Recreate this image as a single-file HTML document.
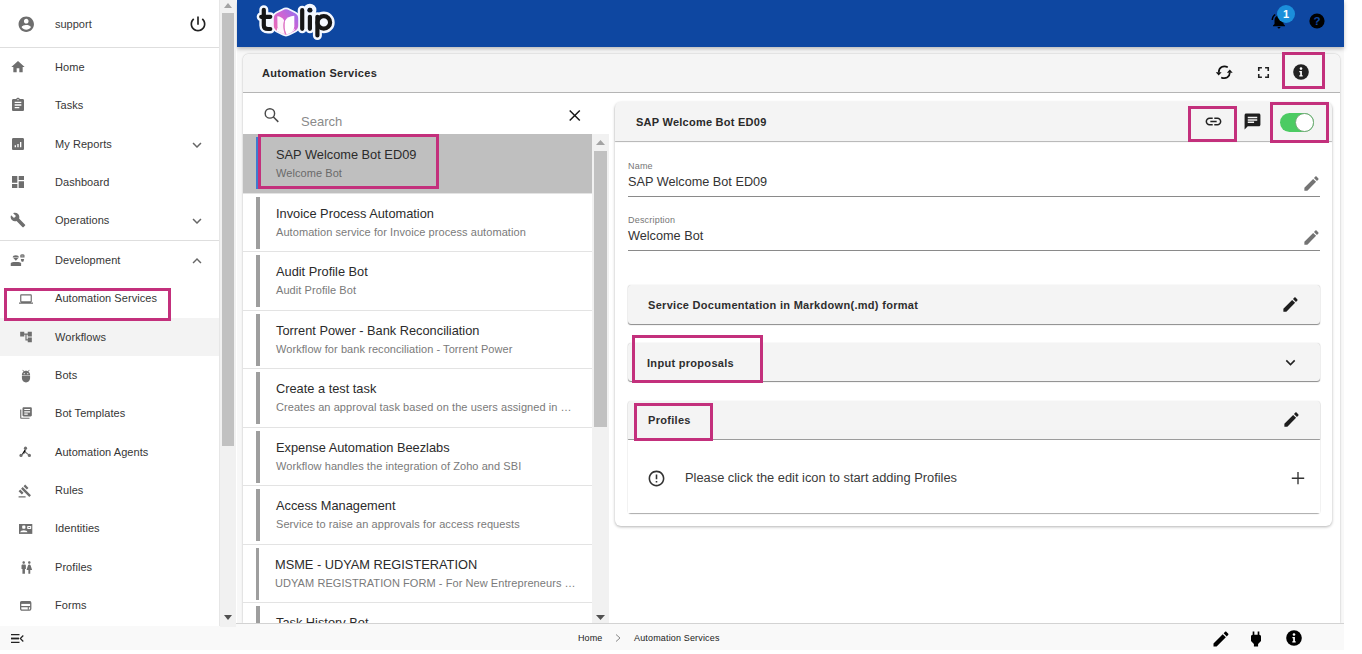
<!DOCTYPE html>
<html><head><meta charset="utf-8">
<style>
*{box-sizing:border-box;margin:0;padding:0}
html,body{width:1362px;height:654px;overflow:hidden;background:#fff;font-family:"Liberation Sans",sans-serif;color:#333}
.abs{position:absolute}
svg{display:block}
.hl{position:absolute;border:3px solid #c3307c}
/* sidebar */
#side{z-index:6;position:absolute;left:0;top:0;width:220px;height:626px;background:#fff;border-right:1px solid #e6e6e6}
.si{position:absolute;left:0;width:219px;height:38px}
.si .ic{position:absolute;left:10px;top:11px;width:16px;height:16px;fill:#6e6e6e}
.si .tx{position:absolute;left:55px;top:13px;font-size:11px;color:#363636;white-space:nowrap;letter-spacing:.06px}
.si .ch{position:absolute;left:188px;top:10.5px;width:18px;height:18px;fill:#666}
#sscroll{z-index:6;position:absolute;left:220px;top:0;width:16px;height:627px;background:#f1f1f1}
/* topbar */
#top{z-index:5;position:absolute;left:237px;top:0;width:1107px;height:47px;background:#0e47a1;box-shadow:0 2px 4px rgba(0,0,0,.25)}
/* bottom bar */
#bot{z-index:5;position:absolute;left:0;top:623px;width:1344px;height:27px;background:#f9f9f9;border-top:1px solid #d3d3d3}
/* list */
.li{position:absolute;left:243px;width:349px;height:58.5px;border-bottom:1px solid #e3e3e3;background:#fff}
.li .bar{position:absolute;left:13px;top:3px;width:4px;height:52px;background:#9e9e9e}
.li .t1{position:absolute;left:33px;top:12px;font-size:12.8px;color:#2b2b2b;white-space:nowrap}
.li .t2{position:absolute;left:33px;top:32px;font-size:11px;color:#7a7a7a;white-space:nowrap;letter-spacing:.07px}
.ph{position:absolute;background:#f4f4f4;box-shadow:0 1px 1px rgba(0,0,0,.45),0 0 1px rgba(0,0,0,.25);border-radius:3px}
.ph .t{position:absolute;left:20px;top:14px;font-size:11px;font-weight:bold;color:#2e2e2e;letter-spacing:.3px;white-space:nowrap}
</style></head><body>

<!-- sidebar -->
<div id="side">
  <div class="abs" style="left:0;top:0;width:219px;height:48px;border-bottom:1px solid #dedede"></div>
  <svg class="abs" style="left:16.5px;top:15.2px;fill:#6e6e6e" width="18.5" height="18.5" viewBox="0 0 24 24"><path d="M12 2C6.48 2 2 6.48 2 12s4.480 10 10 10 10-4.48 10-10S17.52 2 12 2zm0 3c1.66 0 3 1.34 3 3s-1.34 3-3 3-3-1.34-3-3 1.34-3 3-3zm0 14.2c-2.5 0-4.71-1.28-6-3.22.03-1.99 4-3.08 6-3.08 1.99 0 5.970 1.09 6 3.08-1.29 1.94-3.5 3.22-6 3.22z"/></svg>
  <div class="abs" style="left:55px;top:18px;font-size:11px;color:#3a3a3a">support</div>
  <svg class="abs" style="left:188px;top:14px;fill:#222" width="20" height="20" viewBox="0 0 24 24"><path d="M13 3h-2v10h2V3zm4.83 2.17l-1.42 1.42C17.99 7.86 19 9.81 19 12c0 3.87-3.13 7-7 7s-7-3.13-7-7c0-2.19 1.010-4.14 2.58-5.42L6.17 5.17C4.23 6.82 3 9.26 3 12c0 4.97 4.03 9 9 9s9-4.03 9-9c0-2.74-1.23-5.18-3.17-6.83z"/></svg>

  <div class="si" style="top:48px"><svg class="ic" viewBox="0 0 24 24"><path d="M10 20v-6h4v6h5v-8h3L12 3 2 12h3v8z"/></svg><div class="tx">Home</div></div>
  <div class="si" style="top:86px"><svg class="ic" viewBox="0 0 24 24"><path d="M19 3h-4.18C14.4 1.84 13.3 1 12 1c-1.3 0-2.4.84-2.82 2H5c-1.1 0-2 .9-2 2v14c0 1.1.9 2 2 2h14c1.1 0 2-.9 2-2V5c0-1.1-.9-2-2-2zm-7 0c.55 0 1 .45 1 1s-.45 1-1 1-1-.45-1-1 .45-1 1-1zm2 14H7v-2h7v2zm3-4H7v-2h10v2zm0-4H7V7h10v2z"/></svg><div class="tx">Tasks</div></div>
  <div class="si" style="top:125px"><svg class="ic" viewBox="0 0 24 24"><path d="M19 3H5c-1.1 0-2 .9-2 2v14c0 1.1.9 2 2 2h14c1.1 0 2-.9 2-2V5c0-1.1-.9-2-2-2zM9 17H7v-3h2v3zm4 0h-2v-5h2v5zm4 0h-2V9h2v8z"/></svg><div class="tx">My Reports</div><svg class="ch" viewBox="0 0 24 24"><path d="M16.59 8.59L12 13.17 7.41 8.59 6 10l6 6 6-6z"/></svg></div>
  <div class="si" style="top:163px"><svg class="ic" viewBox="0 0 24 24"><path d="M3 13h8V3H3v10zm0 8h8v-6H3v6zm10 0h8V11h-8v10zm0-18v6h8V3h-8z"/></svg><div class="tx">Dashboard</div></div>
  <div class="si" style="top:201px"><svg class="ic" viewBox="0 0 24 24"><path d="M22.7 19l-9.1-9.1c.9-2.3.4-5-1.5-6.9-2-2-5-2.4-7.4-1.3L9 6 6 9 1.6 4.7C.4 7.1.9 10.1 2.9 12.1c1.9 1.9 4.6 2.4 6.9 1.5l9.1 9.1c.4.4 1 .4 1.4 0l2.3-2.3c.5-.4.5-1.1.1-1.4z"/></svg><div class="tx">Operations</div><svg class="ch" viewBox="0 0 24 24"><path d="M16.59 8.59L12 13.17 7.41 8.59 6 10l6 6 6-6z"/></svg></div>
  <div class="abs" style="left:0;top:240px;width:219px;height:1px;background:#dedede"></div>
  <div class="si" style="top:241px"><svg class="abs" style="left:8px;top:9px" width="24" height="20" viewBox="0 0 24 20"><g fill="#6e6e6e"><path d="M4.7 7.6Q4.9 5.2 7.8 5.2Q10.7 5.2 10.9 7.6Z"/><path d="M5.3 8.1H10.4L7.85 10.7Z"/><path d="M2.75 15.9V13.6Q2.75 12 5.5 12H10.4Q13.1 12 13.1 13.6V15.9Z"/><path d="M12.3 5.2Q12.3 4.3 14.4 4.3Q16.5 4.3 16.5 5.2V7.5H12.3ZM13.3 5.7V6.3H15.5V5.7Z" fill-rule="evenodd"/><path d="M12.8 9H16.1L15.6 11.2Q14.45 12.2 13.3 11.2Z"/></g></svg><div class="tx">Development</div><svg class="ch" viewBox="0 0 24 24"><path d="M12 8l-6 6 1.41 1.41L12 10.83l4.59 4.58L18 14z"/></svg></div>
  <div class="si" style="top:279px"><svg class="ic" style="left:18.7px;width:14px;height:14px;top:12.7px" viewBox="0 0 24 24"><path d="M20 18c1.1 0 1.99-.9 1.99-2L22 6c0-1.1-.9-2-2-2H4c-1.1 0-2 .9-2 2v10c0 1.1.9 2 2 2H0v2h24v-2h-4zM4 6h16v10H4V6z"/></svg><div class="tx">Automation Services</div></div>
  <div class="si" style="top:318px;background:#f3f3f3"><svg class="ic" style="left:18.5px;width:14px;height:14px;top:12px" viewBox="0 0 24 24"><path d="M22 11V3h-7v3H9V3H2v8h7V8h2v10h4v3h7v-8h-7v3h-2V8h2v3z"/></svg><div class="tx">Workflows</div></div>
  <div class="si" style="top:356px"><svg class="ic" style="left:19px;width:14px;height:14px;top:13px" viewBox="0 0 24 24"><path d="M5 16c0 3.87 3.13 7 7 7s7-3.13 7-7v-4H5v4zM16.12 4.37l2.1-2.1-.82-.83-2.3 2.31C14.16 3.28 13.12 3 12 3s-2.16.28-3.09.75L6.6 1.44l-.82.83 2.1 2.1C6.14 5.64 5 7.68 5 10v1h14v-1c0-2.32-1.14-4.36-2.88-5.63zM9 9c-.55 0-1-.45-1-1s.45-1 1-1 1 .45 1 1-.45 1-1 1zm6 0c-.55 0-1-.45-1-1s.45-1 1-1 1 .45 1 1-.45 1-1 1z"/></svg><div class="tx">Bots</div></div>
  <div class="si" style="top:394px"><svg class="ic" style="left:19px;width:14px;height:14px;top:12px" viewBox="0 0 24 24"><path d="M4 6H2v14c0 1.1.9 2 2 2h14v-2H4V6zm16-4H8c-1.1 0-2 .9-2 2v12c0 1.1.9 2 2 2h12c1.1 0 2-.9 2-2V4c0-1.1-.9-2-2-2zm-1 9H9V9h10v2zm-4 4H9v-2h6v2zm4-8H9V5h10v2z"/></svg><div class="tx">Bot Templates</div></div>
  <div class="si" style="top:433px"><svg class="abs" style="left:17px;top:12px" width="16" height="14" viewBox="0 0 16 14"><g stroke="#777" stroke-width="1.1"><path d="M8.5 3.2V7.2L4 10.4M8.5 7.2L12.4 10.4"/></g><g fill="#6e6e6e"><circle cx="8.5" cy="3.2" r="1.6"/><circle cx="4" cy="10.4" r="1.6"/><circle cx="12.4" cy="10.4" r="1.6"/></g></svg><div class="tx">Automation Agents</div></div>
  <div class="si" style="top:471px"><svg class="ic" style="left:18.3px;width:14px;height:14px;top:13px" viewBox="0 0 24 24"><path d="M1 21h12v2H1v-2zM5.245 8.07l2.83-2.827 14.14 14.142-2.828 2.828L5.245 8.07zM12.317 1l5.657 5.656-2.83 2.83-5.654-5.66L12.317 1zM3.825 9.485l5.657 5.657-2.828 2.828-5.657-5.657 2.828-2.828z"/></svg><div class="tx">Rules</div></div>
  <div class="si" style="top:509px"><svg class="abs" style="left:18.7px;top:14.9px" width="14" height="10" viewBox="0 0 14 10"><rect x="0" y="0" width="13.3" height="9.9" fill="#6e6e6e"/><g fill="#fff"><rect x="3.2" y="1.6" width="3.2" height="3.2" rx=".8"/><path d="M1 8.2Q1.6 6.3 4.8 6.3Q8 6.3 8.4 8.2Z"/><rect x="8.2" y="2" width="4" height="2.9" rx=".6"/></g><rect x="9.4" y="3" width="1.7" height=".9" fill="#6e6e6e"/></svg><div class="tx">Identities</div></div>
  <div class="si" style="top:548px"><svg class="ic" style="left:18.5px;width:15px;height:15px;top:11.5px" viewBox="0 0 24 24"><path d="M5.5 22v-7.5H4V9c0-1.1.9-2 2-2h3c1.1 0 2 .9 2 2v5.5H9.5V22h-4zM18 22v-6h3l-2.54-7.63C18.18 7.55 17.42 7 16.56 7h-.12c-.86 0-1.63.55-1.9 1.37L12 16h3v6h3zM7.5 6c1.11 0 2-.89 2-2s-.89-2-2-2-2 .89-2 2 .89 2 2 2zm9 0c1.11 0 2-.89 2-2s-.89-2-2-2-2 .89-2 2 .89 2 2 2z"/></svg><div class="tx">Profiles</div></div>
  <div class="si" style="top:586px"><svg class="abs" style="left:20px;top:15px" width="12" height="10" viewBox="0 0 12 10"><rect x=".65" y=".65" width="10.1" height="8.4" rx="1.2" fill="none" stroke="#6e6e6e" stroke-width="1.3"/><rect x=".6" y=".6" width="10.2" height="2.3" fill="#6e6e6e"/><path d="M1 5.6H10.5M8.3 5.6V8.8" stroke="#6e6e6e" stroke-width="1.1"/></svg><div class="tx">Forms</div></div>
</div>
<div class="hl" style="left:4px;top:288px;width:167px;height:33px;z-index:7"></div>
<div id="sscroll">
  <div class="abs" style="left:2px;top:13px;width:12px;height:433px;background:#c1c1c1"></div>
  <svg class="abs" style="left:4px;top:3px" width="8" height="5" viewBox="0 0 8 5"><path d="M4 0L8 5H0z" fill="#a3a3a3"/></svg>
  <svg class="abs" style="left:4px;top:615px" width="8" height="5" viewBox="0 0 8 5"><path d="M0 0H8L4 5z" fill="#505050"/></svg>
</div>

<!-- topbar -->
<div id="top"><!--logo-->
  <svg class="abs" style="left:1032.5px;top:11.5px;fill:#000" width="18" height="18" viewBox="0 0 24 24"><path d="M7.58 4.08L6.15 2.65C3.75 4.48 2.17 7.3 2.03 10.5h2c.15-2.65 1.51-4.97 3.55-6.42zm12.39 6.42h2c-.15-3.2-1.73-6.02-4.12-7.850l-1.42 1.43c2.02 1.45 3.39 3.77 3.54 6.42zM18 11c0-3.07-1.64-5.64-4.5-6.32V4c0-.83-.67-1.5-1.5-1.5s-1.5.67-1.5 1.5v.68C7.63 5.36 6 7.92 6 11v5l-2 2v1h16v-1l-2-2v-5zm-6 11c.14 0 .27-.01.4-.04.65-.14 1.18-.58 1.44-1.18.1-.24.16-.5.16-.78h-4c.01 1.1.9 2 2 2z"/></svg>
  <div class="abs" style="left:1040px;top:4.5px;width:18px;height:18px;border-radius:50%;background:#1b8fdb;color:#fff;font-size:11px;font-weight:bold;text-align:center;line-height:18px">1</div>
  <svg class="abs" style="left:1072px;top:13.3px" width="16" height="16" viewBox="0 0 16 16"><circle cx="8" cy="8" r="7.6" fill="#000"/><text x="8" y="12.3" text-anchor="middle" font-family="Liberation Sans" font-weight="bold" font-size="11.5" fill="#0e47a1">?</text></svg>
</div>


<svg class="abs" style="left:0;top:0;z-index:6" width="1362" height="47" viewBox="0 0 1362 47">
  <defs>
    <linearGradient id="hg" x1="0" y1="1" x2="1" y2="0">
      <stop offset="0" stop-color="#f070b0"/>
      <stop offset="0.55" stop-color="#cf64d2"/>
      <stop offset="1" stop-color="#8a72f5"/>
    </linearGradient>
  </defs>
  <g fill="none" stroke="#f4f8ff" stroke-linecap="round" stroke-linejoin="round" stroke-width="9">
    <path d="M263.8 9.8V25.5Q263.8 29 268 29H270.3M261.2 16.8H270.3"/>
    <path d="M302.2 10.2V28.8M309.9 16.8V28.8M317.4 16.8V35.5"/>
    <circle cx="323.8" cy="22.4" r="6.4"/>
    <circle cx="309.9" cy="10.2" r="2.0"/>
  </g>
  <path d="M282.9 10.15Q286 8.5 289.1 10.15L295.1 13.35Q298.2 15 298.2 18.5L298.2 25.5Q298.2 29 295.1 30.65L289.1 33.85Q286 35.5 282.9 33.85L276.9 30.65Q273.8 29 273.8 25.5L273.8 18.5Q273.8 15 276.9 13.35Z" fill="#f4f8ff" stroke="#f4f8ff" stroke-width="3.4" stroke-linejoin="round"/>
  <rect x="262" y="15" width="11" height="15" fill="#f4f8ff"/>
  <circle cx="323.8" cy="22.4" r="6.5" fill="#f4f8ff"/>
  <path d="M282.9 10.15Q286 8.5 289.1 10.15L295.1 13.35Q298.2 15 298.2 18.5L298.2 25.5Q298.2 29 295.1 30.65L289.1 33.85Q286 35.5 282.9 33.85L276.9 30.65Q273.8 29 273.8 25.5L273.8 18.5Q273.8 15 276.9 13.35Z" fill="url(#hg)"/>
  <g fill="#fff">
    <path d="M277.3 16.3Q281.8 16.6 284.1 20.2Q282.6 27 285.1 34.2Q279 32.6 277.5 27Z" fill="#fdf3fb"/>
    <path d="M284.9 21Q287.6 16.3 294.3 15.8V26.5Q294.3 32.5 286.5 34.6Q283.6 28 284.9 21Z"/>
    <path d="M277.4 27.5Q281 33.4 286 34.8Q291 33.7 294.6 28.5V30.3L289.1 33.85Q286 35.5 282.9 33.85L276.9 30.65Z"/>
  </g>
  <path d="M284.4 21.6Q282.9 27.5 285.4 34" stroke="#e07cc2" stroke-width="1.1" fill="none" opacity=".85"/>
  <g fill="none" stroke="#151515" stroke-linecap="round" stroke-linejoin="round" stroke-width="4.2">
    <path d="M263.8 9.8V25.5Q263.8 29 268 29H270.3M261.2 16.8H270.3"/>
    <path d="M302.2 10.2V28.8M309.9 16.8V28.8M317.4 16.8V35.5"/>
    <circle cx="323.8" cy="22.4" r="6.3"/>
  </g>
  <circle cx="309.9" cy="10.2" r="2.4" fill="#151515"/>
</svg>

<!-- bottom bar -->
<div id="bot">
  <svg class="abs" style="left:11px;top:10px" width="13" height="9" viewBox="0 0 13 9"><path d="M0 .6H8.5M0 4.5H8M0 8.4H8.5" stroke="#222" stroke-width="1.2"/><path d="M0 4.5H8" stroke="#222" stroke-width="1.8"/><path d="M12.3 1.5L9.3 4.5L12.3 7.5" stroke="#222" stroke-width="1.2" fill="none"/></svg>
  <div class="abs" style="left:578px;top:9px;font-size:9px;letter-spacing:.1px;color:#222">Home</div>
  <svg class="abs" style="left:615px;top:10px" width="6" height="8" viewBox="0 0 6 8"><path d="M1 .5L5 4L1 7.5" stroke="#888" stroke-width="1" fill="none"/></svg>
  <div class="abs" style="left:634px;top:9px;font-size:9px;letter-spacing:.16px;color:#222">Automation Services</div>
  <svg class="abs" style="left:1211px;top:5px;fill:#000" width="20" height="20" viewBox="0 0 24 24"><path d="M3 17.25V21h3.75L17.81 9.94l-3.75-3.75L3 17.25zM20.71 7.04c.39-.39.39-1.02 0-1.41l-2.34-2.34c-.39-.39-1.02-.39-1.41 0l-1.83 1.83 3.750 3.75 1.83-1.83z"/></svg>
  <svg class="abs" style="left:1245.8px;top:4.5px;fill:#000" width="20" height="20" viewBox="0 0 24 24"><path d="M16 7V3h-2v4h-4V3H8v4h-.01C6.9 6.99 6 7.89 6 8.98v5.52L9.5 18v3h5v-3l3.5-3.51v-5.5c0-1.1-.9-2-2-2z"/></svg>
  <svg class="abs" style="left:1286.2px;top:6.4px" width="16" height="16" viewBox="0 0 16 16"><circle cx="8" cy="8" r="7.8" fill="#000"/><circle cx="8" cy="4.5" r="1.3" fill="#fff"/><path d="M6.4 6.9h2.5v4.4h.8v1.3H6.3v-1.3h.9V8.2h-.8z" fill="#fff"/></svg>
</div>

<!-- main card -->
<div class="abs" style="left:237px;top:47px;width:1107px;height:576px;background:#f8f8f8"></div>
<div class="abs" style="left:243px;top:54px;width:1097px;height:569px;background:#fff;box-shadow:0 0 2px rgba(0,0,0,.3);border-radius:6px 6px 0 0"></div>
<div class="abs" style="left:243px;top:54px;width:1097px;height:39px;background:#f5f5f5;border-radius:6px 6px 0 0;border-bottom:1px solid #b5b5b5"></div>
<div class="abs" style="left:262px;top:67px;font-size:11px;font-weight:bold;letter-spacing:.3px;color:#2a2a2a">Automation Services</div>

<!-- search -->
<svg class="abs" style="left:260px;top:104px" width="22" height="22" viewBox="0 0 22 22"><circle cx="9.9" cy="9.4" r="4.7" fill="none" stroke="#4a4a4a" stroke-width="1.45"/><path d="M13.2 12.8L18.3 17.9" stroke="#4a4a4a" stroke-width="1.5"/></svg>
<div class="abs" style="left:301px;top:114px;font-size:13px;color:#8a8a8a">Search</div>
<svg class="abs" style="left:565px;top:106px" width="20" height="20" viewBox="0 0 20 20"><path d="M4.7 4.5L14.8 14.5M14.8 4.5L4.7 14.5" stroke="#1a1a1a" stroke-width="1.5"/></svg>


<div class="abs" style="left:592px;top:134px;width:17px;height:489px;background:#f1f1f1"></div>
<div class="abs" style="left:594px;top:151px;width:13px;height:276px;background:#c1c1c1"></div>
<svg class="abs" style="left:596px;top:140px" width="9" height="5" viewBox="0 0 9 5"><path d="M4.5 0L9 5H0z" fill="#a3a3a3"/></svg>
<svg class="abs" style="left:596px;top:615px" width="9" height="5" viewBox="0 0 9 5"><path d="M0 0H9L4.5 5z" fill="#505050"/></svg>
<div class="hl" style="left:258px;top:134px;width:181px;height:55px;z-index:3"></div>
<!-- detail card -->
<div class="abs" style="left:615px;top:102px;width:717px;height:424px;background:#fff;border-radius:6px;box-shadow:0 1px 3px rgba(0,0,0,.3)"></div>
<div class="abs" style="left:615px;top:102px;width:717px;height:39px;background:#f4f4f4;border-radius:6px 6px 0 0;box-shadow:0 1px 1px rgba(0,0,0,.3)"></div>
<div class="abs" style="left:636px;top:116px;font-size:11px;font-weight:bold;letter-spacing:.25px;color:#2a2a2a;white-space:nowrap">SAP Welcome Bot ED09</div>
<svg class="abs" style="left:1204px;top:112px;fill:#222" width="19" height="19" viewBox="0 0 24 24"><path d="M3.9 12c0-1.71 1.39-3.1 3.1-3.1h4V7H7c-2.76 0-5 2.24-5 5s2.24 5 5 5h4v-1.9H7c-1.71 0-3.1-1.39-3.1-3.1zM8 13h8v-2H8v2zm9-6h-4v1.9h4c1.71 0 3.1 1.39 3.1 3.1s-1.39 3.1-3.1 3.1h-4V17h4c2.76 0 5-2.24 5-5s-2.24-5-5-5z"/></svg>
<svg class="abs" style="left:1243px;top:112px;fill:#1e1e1e" width="19" height="19" viewBox="0 0 24 24"><path d="M20 2H4c-1.1 0-1.99.9-1.99 2L2 22l4-4h14c1.1 0 2-.9 2-2V4c0-1.1-.9-2-2-2zM6 9h12v2H6V9zm8 5H6v-2h8v2zm4-6H6V6h12v2z"/></svg>
<div class="abs" style="left:1280px;top:113px;width:34px;height:19px;border-radius:10px;background:#4ccb63"></div>
<div class="abs" style="left:1295.3px;top:113px;width:18.8px;height:18.8px;border-radius:50%;background:#fff;border:1px solid #72a776"></div>
<div class="hl" style="left:1188px;top:106px;width:49px;height:36px"></div>
<div class="hl" style="left:1270px;top:102px;width:59px;height:41px"></div>

<div class="abs" style="left:628px;top:161px;font-size:9px;letter-spacing:.2px;color:#767676">Name</div>
<div class="abs" style="left:628px;top:175px;font-size:12.7px;color:#333;white-space:nowrap">SAP Welcome Bot ED09</div>
<div class="abs" style="left:628px;top:196px;width:692px;height:1px;background:#8a8a8a"></div>
<svg class="abs" style="left:1301.5px;top:173.7px;fill:#747474" width="19" height="19" viewBox="0 0 24 24"><path d="M3 17.25V21h3.75L17.81 9.94l-3.75-3.75L3 17.25zM20.71 7.04c.39-.39.39-1.02 0-1.41l-2.34-2.34c-.39-.39-1.02-.39-1.41 0l-1.83 1.83 3.75 3.75 1.83-1.83z"/></svg>
<div class="abs" style="left:628px;top:215px;font-size:9px;letter-spacing:.2px;color:#767676">Description</div>
<div class="abs" style="left:628px;top:229px;font-size:12.7px;color:#333;white-space:nowrap">Welcome Bot</div>
<div class="abs" style="left:628px;top:250px;width:692px;height:1px;background:#8a8a8a"></div>
<svg class="abs" style="left:1301.5px;top:227.7px;fill:#747474" width="19" height="19" viewBox="0 0 24 24"><path d="M3 17.25V21h3.75L17.81 9.94l-3.75-3.75L3 17.25zM20.710 7.04c.39-.39.39-1.02 0-1.41l-2.34-2.34c-.39-.39-1.02-.39-1.41 0l-1.83 1.83 3.75 3.75 1.83-1.83z"/></svg>

<div class="ph" style="left:628px;top:285px;width:692px;height:39px"><div class="t">Service Documentation in Markdown(.md) format</div>
<svg class="abs" style="left:653px;top:10px;fill:#1e1e1e" width="19" height="19" viewBox="0 0 24 24"><path d="M3 17.25V21h3.75L17.81 9.94l-3.75-3.75L3 17.25zM20.71 7.04c.39-.39.39-1.02 0-1.41l-2.34-2.34c-.39-.39-1.02-.39-1.41 0l-1.83 1.83 3.75 3.75 1.83-1.83z"/></svg></div>
<div class="ph" style="left:628px;top:343px;width:692px;height:38px"><div class="t" style="left:19px">Input proposals</div>
<svg class="abs" style="left:653px;top:10px;fill:#222" width="19" height="19" viewBox="0 0 24 24"><path d="M16.59 8.59L12 13.17 7.41 8.59 6 10l6 6 6-6z"/></svg></div>
<div class="ph" style="left:628px;top:401px;width:692px;height:112px;box-shadow:0 1px 1px rgba(0,0,0,.32),0 0 1px rgba(0,0,0,.22)"></div>
<div class="abs" style="left:628px;top:401px;width:692px;height:38px;background:#f4f4f4;border-radius:3px 3px 0 0;box-shadow:0 1px 1px rgba(0,0,0,.4)"><div class="abs" style="left:20px;top:13px;font-size:11px;font-weight:bold;letter-spacing:.3px;color:#2e2e2e">Profiles</div>
<svg class="abs" style="left:653.8px;top:9px;fill:#1e1e1e" width="19" height="19" viewBox="0 0 24 24"><path d="M3 17.25V21h3.75L17.81 9.94l-3.75-3.75L3 17.25zM20.71 7.04c.39-.39.39-1.02 0-1.41l-2.34-2.34c-.39-.39-1.02-.39-1.41 0l-1.83 1.83 3.75 3.75 1.83-1.83z"/></svg></div>
<div class="abs" style="left:628px;top:440px;width:692px;height:73px;background:#fff"></div>
<svg class="abs" style="left:647.3px;top:469px;fill:#333" width="19" height="19" viewBox="0 0 24 24"><path d="M11 15h2v2h-2zm0-8h2v6h-2zm.99-5C6.47 2 2 6.48 2 12s4.47 10 9.99 10C17.52 22 22 17.52 22 12S17.52 2 11.99 2zM12 20c-4.42 0-8-3.58-8-8s3.58-8 8-8 8 3.58 8 8-3.58 8-8 8z"/></svg>
<div class="abs" style="left:685px;top:469.5px;font-size:12.85px;color:#3a3a3a;white-space:nowrap">Please click the edit icon to start adding Profiles</div>
<svg class="abs" style="left:1290px;top:470px" width="16" height="16" viewBox="0 0 16 16"><path d="M8 2V14.3M1.8 8.2H14.2" stroke="#333" stroke-width="1.35"/></svg>
<div class="hl" style="left:632px;top:335px;width:131px;height:48px"></div>
<div class="hl" style="left:634px;top:403px;width:79px;height:38px"></div>

<!-- header icons -->
<svg class="abs" style="left:1210px;top:60px" width="30" height="24" viewBox="0 0 30 24"><g fill="none" stroke="#111" stroke-width="1.7" stroke-linecap="butt"><path d="M17.8 7.3Q14.5 5.6 11.6 7.1Q8.9 8.6 8.7 12.4"/><path d="M11.2 17.4Q14.5 19 17.4 17.3Q19.7 15.8 19.8 12.6"/></g><path d="M5.8 12.3H11.6L8.7 15.4Z" fill="#111"/><path d="M16.9 12.7H22.7L19.8 9.6Z" fill="#111"/></svg>
<svg class="abs" style="left:1254px;top:63px;fill:#222" width="19" height="19" viewBox="0 0 24 24"><path d="M7 14H5v5h5v-2H7v-3zm-2-4h2V7h3V5H5v5zm12 7h-3v2h5v-5h-2v3zM14 5v2h3v3h2V5h-5z"/></svg>
<svg class="abs" style="left:1293.3px;top:64.4px" width="16" height="16" viewBox="0 0 16 16"><circle cx="8" cy="8" r="7.8" fill="#222"/><circle cx="8" cy="4.6" r="1.3" fill="#fff"/><path d="M6.3 7h2.6v4.3h.8v1.3H6.3v-1.3h.9V8.3h-.9z" fill="#fff"/></svg>
<div class="hl" style="left:1282px;top:52px;width:43px;height:37px"></div>

<!-- list -->
<div id="list" class="abs" style="left:0;top:0;width:1362px;height:624px;overflow:hidden;clip-path:inset(134px 0 0 0)">
  <div class="li" style="top:134px;height:59.5px;background:#bfbfbf"><div class="bar" style="background:#3d7bd0;width:2.5px;top:2.5px;height:52px"></div><div class="t1" style="top:13px">SAP Welcome Bot ED09</div><div class="t2" style="top:33px;color:#6a6a6a">Welcome Bot</div></div>
  <div class="li" style="top:193.5px"><div class="bar"></div><div class="t1">Invoice Process Automation</div><div class="t2">Automation service for Invoice process automation</div></div>
  <div class="li" style="top:252.0px"><div class="bar"></div><div class="t1">Audit Profile Bot</div><div class="t2">Audit Profile Bot</div></div>
  <div class="li" style="top:310.5px"><div class="bar"></div><div class="t1">Torrent Power - Bank Reconciliation</div><div class="t2">Workflow for bank reconciliation - Torrent Power</div></div>
  <div class="li" style="top:369.0px"><div class="bar"></div><div class="t1">Create a test task</div><div class="t2">Creates an approval task based on the users assigned in …</div></div>
  <div class="li" style="top:427.5px"><div class="bar"></div><div class="t1">Expense Automation Beezlabs</div><div class="t2">Workflow handles the integration of Zoho and SBI</div></div>
  <div class="li" style="top:486.0px"><div class="bar"></div><div class="t1">Access Management</div><div class="t2">Service to raise an approvals for access requests</div></div>
  <div class="li" style="top:544.5px"><div class="bar" style="width:3px"></div><div class="t1" style="left:32px">MSME - UDYAM REGISTERATION</div><div class="t2" style="left:32px">UDYAM REGISTRATION FORM - For New Entrepreneurs …</div></div>
  <div class="li" style="top:603.0px"><div class="bar"></div><div class="t1">Task History Bot</div><div class="t2">Task history</div></div>
</div>

</body></html>
